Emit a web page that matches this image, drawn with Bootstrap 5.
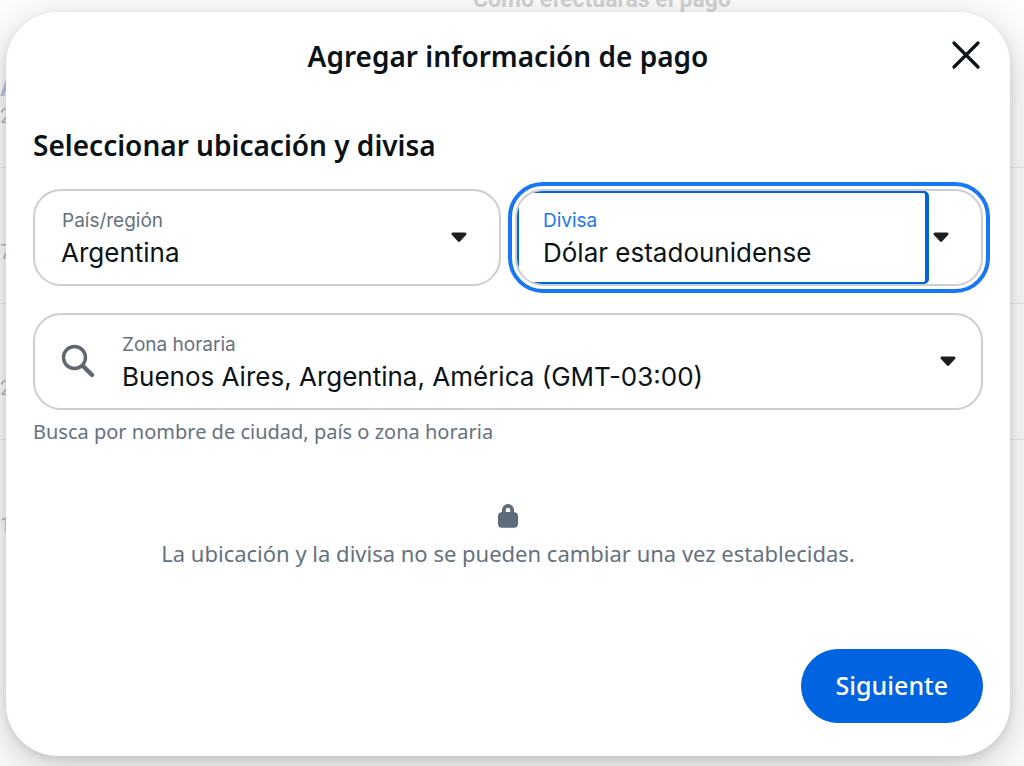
<!DOCTYPE html>
<html lang="es">
<head>
<meta charset="utf-8">
<meta name="viewport" content="width=device-width, initial-scale=1">
<title>Agregar información de pago</title>
<link href="https://cdn.jsdelivr.net/npm/bootstrap@5.3.0/dist/css/bootstrap.min.css" rel="stylesheet">
<style>
  :root { --ink: #0a1317; --muted: #65717f; --line: #ccced1; --accent: #0064e0; --focus: #1877f2; }
  body { font-family: "Noto Sans", sans-serif; color: var(--ink); background: #fdfdfd; overflow: hidden; }

  /* Page behind the dialog */
  .backpage { font-family: Roboto, sans-serif; color: #b9bbbd; }
  .backpage h1 { font-size: 23px; line-height: 24px; margin: -12px 0 0; padding-left: 180px; color: #d2d2d2; }
  .backrow { height: 136px; border-bottom: 1px solid #e8e9ea; font-size: 20px; line-height: 20px; padding-bottom: 41px; }
  .backrow:first-of-type { height: 156px; }
  .backrow a { font-size: 25px; line-height: 36px; font-weight: 700; color: #b9c6e6; }

  /* Dialog */
  .overlay { padding: 12px 14px 10px 6px; }
  .pay-dialog { border-radius: 52px; padding: 24px 27px 33px;
    box-shadow: 0 12px 44px rgba(0,0,0,.2), 0 3px 8px rgba(0,0,0,.1); }
  .pay-title { font-size: 28px; line-height: 40px; }
  .pay-header { padding-bottom: 49px; }
  .pay-section { padding-bottom: 24px; }
  .close-btn { right: 0; width: 33px; height: 38px; }
  .fields { gap: 27px 14px; }
  .field { height: 97px; border: 2px solid var(--line); border-radius: 28px; font-family: Inter, sans-serif; }
  .field label { left: 27px; top: 18px; font-size: 19px; line-height: 24px; color: var(--muted); }
  .field select, .field input { appearance: none; background: none; border: 0; outline: 0; width: 100%;
    height: 100%; padding: 30px 52px 0 26px; font-size: 26px; color: var(--ink); }
  .field .caret { right: 32px; top: 41px; pointer-events: none; }
  .field.active { outline: 4px solid var(--focus); outline-offset: 3px; }
  .field.active label { left: 26px; color: var(--focus); }
  .field.active select { width: calc(100% - 52px); padding-left: 24px; border: solid var(--accent);
    border-width: 2px 4px 2px 2px; border-radius: 0 5px 5px 0; }
  .field.search label { left: 87px; }
  .field.search input { padding-left: 87px; }
  .field.search .caret { right: 25px; }
  .search-icon { left: 26px; top: 29px; }
  .hint { font-size: 20px; line-height: 24px; padding-top: 10px; color: var(--muted); }
  .notice { font-size: 22px; line-height: 30px; color: var(--muted); padding: 60px 0 81px; }
  .notice p { padding-top: 10px; }
  .next-btn { --bs-btn-bg: var(--accent); --bs-btn-color: #fff; --bs-btn-border-color: var(--accent);
    --bs-btn-hover-bg: #0057c4; --bs-btn-hover-color: #fff; height: 74px; padding: 0 34px;
    font-size: 25px; font-weight: 500; }
</style>
</head>
<body>
<main class="backpage" aria-hidden="true">
  <h1 class="text-center fw-bold">Cómo efectuarás el pago</h1>
  <div class="backrow d-flex flex-column justify-content-end"><a href="#" class="text-decoration-none" tabindex="-1">A</a><span>2</span></div>
  <div class="backrow d-flex align-items-end">7</div>
  <div class="backrow d-flex align-items-end">2</div>
  <div class="backrow d-flex align-items-end border-0">1</div>
</main>

<div class="overlay position-absolute top-0 start-0 w-100">
  <div class="pay-dialog bg-white" role="dialog" aria-modal="true" aria-labelledby="dlgTitle">
    <header class="pay-header position-relative">
      <h2 id="dlgTitle" class="pay-title text-center fw-semibold m-0">Agregar información de pago</h2>
      <button type="button" class="close-btn btn p-0 border-0 position-absolute top-0 d-flex align-items-center" aria-label="Cerrar">
        <svg width="32" height="32" viewBox="0 0 32 32" fill="none" stroke="#0a1317" stroke-width="3.300" stroke-linecap="round"><path d="M4 4l24 24M28 4L4 28"/></svg>
      </button>
    </header>

    <form>
      <h3 class="pay-title pay-section fw-semibold m-0">Seleccionar ubicación y divisa</h3>
      <div class="fields d-flex flex-wrap">
        <div class="field position-relative overflow-hidden flex-fill w-25">
          <label for="country" class="position-absolute">País/región</label>
          <select id="country"><option>Argentina</option></select>
          <svg class="caret position-absolute" width="16" height="11" viewBox="0 0 16 11"><path d="M2 .5h12c1.6 0 2 1.500 1 2.500L9.200 9.300c-.8.800-1.600.800-2.400 0L1 3C0 2 .4.500 2 .5z" fill="#1c1e21"/></svg>
        </div>
        <div class="field active position-relative overflow-hidden flex-fill w-25">
          <label for="currency" class="position-absolute">Divisa</label>
          <select id="currency"><option>Dólar estadounidense</option></select>
          <svg class="caret position-absolute" width="16" height="11" viewBox="0 0 16 11"><path d="M2 .5h12c1.6 0 2 1.500 1 2.500L9.200 9.300c-.8.800-1.600.800-2.400 0L1 3C0 2 .4.500 2 .5z" fill="#1c1e21"/></svg>
        </div>
        <div class="field search position-relative overflow-hidden w-100">
          <svg class="search-icon position-absolute" width="34" height="34" viewBox="0 0 34 34" fill="none" stroke="#5f6670" stroke-linecap="round"><circle cx="13.500" cy="13.500" r="11" stroke-width="3.400"/><path d="M22 22l9 9" stroke-width="4.400"/></svg>
          <label for="tz" class="position-absolute">Zona horaria</label>
          <input id="tz" type="text" value="Buenos Aires, Argentina, América (GMT-03:00)">
          <svg class="caret position-absolute" width="16" height="11" viewBox="0 0 16 11"><path d="M2 .5h12c1.6 0 2 1.500 1 2.500L9.200 9.300c-.8.800-1.600.800-2.400 0L1 3C0 2 .4.500 2 .5z" fill="#1c1e21"/></svg>
        </div>
      </div>
      <div class="hint">Busca por nombre de ciudad, país o zona horaria</div>

      <div class="notice text-center">
        <svg class="d-block mx-auto" width="20" height="24" viewBox="0 0 20 24"><path fill="#5d6c7b" fill-rule="evenodd" d="M4 8V6a6 6 0 0 1 12 0v2c2.600.3 4 1.800 4 4.300V19c0 3.500-1.200 4.700-4.500 4.700h-11C1.200 23.700 0 22.500 0 19v-6.700C0 9.800 1.400 8.300 4 8zM7.800 8h4.400V6a2.200 2.200 0 0 0-4.400 0z"/></svg>
        <p class="m-0">La ubicación y la divisa no se pueden cambiar una vez establecidas.</p>
      </div>

      <div class="d-flex justify-content-end">
        <button type="button" class="next-btn btn rounded-pill">Siguiente</button>
      </div>
    </form>
  </div>
</div>
<script src="https://cdn.jsdelivr.net/npm/bootstrap@5.3.0/dist/js/bootstrap.bundle.min.js"></script>
</body>
</html>
